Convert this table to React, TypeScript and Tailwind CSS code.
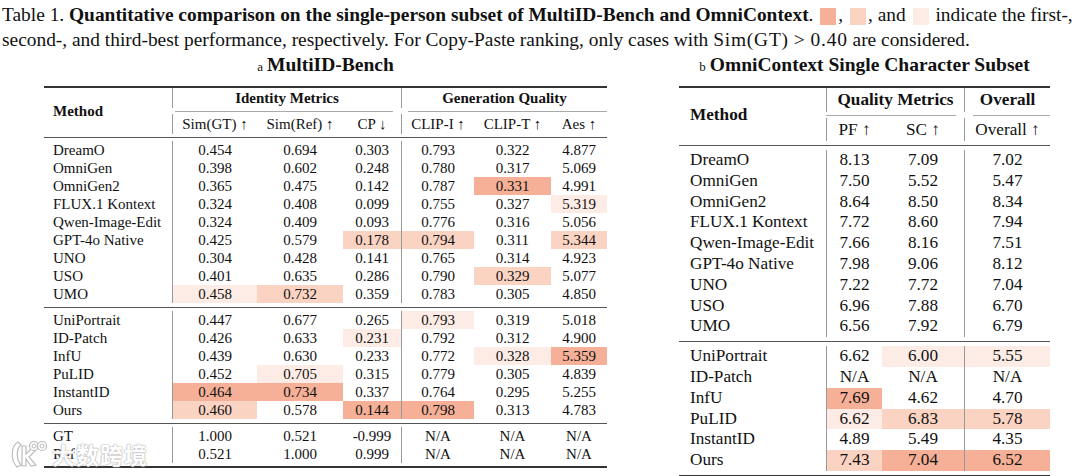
type Row = [string, string[], number[]?];

const hl = ["", "bg-[#f5b097]", "bg-[#fbd3c3]", "bg-[#fdece5]"];

const leftCols = ["w-[85px]", "w-[86px]", "w-[58px]", "w-[73px]", "w-[77px]", "w-[56px]"];
const rightCols = ["w-[56px]", "w-[82px]", "w-[86px]"];

const leftA: Row[] = [
  ["DreamO", ["0.454", "0.694", "0.303", "0.793", "0.322", "4.877"]],
  ["OmniGen", ["0.398", "0.602", "0.248", "0.780", "0.317", "5.069"]],
  ["OmniGen2", ["0.365", "0.475", "0.142", "0.787", "0.331", "4.991"], [0, 0, 0, 0, 1, 0]],
  ["FLUX.1 Kontext", ["0.324", "0.408", "0.099", "0.755", "0.327", "5.319"], [0, 0, 0, 0, 0, 3]],
  ["Qwen-Image-Edit", ["0.324", "0.409", "0.093", "0.776", "0.316", "5.056"]],
  ["GPT-4o Native", ["0.425", "0.579", "0.178", "0.794", "0.311", "5.344"], [0, 0, 2, 2, 0, 2]],
  ["UNO", ["0.304", "0.428", "0.141", "0.765", "0.314", "4.923"]],
  ["USO", ["0.401", "0.635", "0.286", "0.790", "0.329", "5.077"], [0, 0, 0, 0, 2, 0]],
  ["UMO", ["0.458", "0.732", "0.359", "0.783", "0.305", "4.850"], [3, 2, 0, 0, 0, 0]],
];

const leftB: Row[] = [
  ["UniPortrait", ["0.447", "0.677", "0.265", "0.793", "0.319", "5.018"], [0, 0, 0, 3, 0, 0]],
  ["ID-Patch", ["0.426", "0.633", "0.231", "0.792", "0.312", "4.900"], [0, 0, 3, 0, 0, 0]],
  ["InfU", ["0.439", "0.630", "0.233", "0.772", "0.328", "5.359"], [0, 0, 0, 0, 3, 1]],
  ["PuLID", ["0.452", "0.705", "0.315", "0.779", "0.305", "4.839"], [0, 3, 0, 0, 0, 0]],
  ["InstantID", ["0.464", "0.734", "0.337", "0.764", "0.295", "5.255"], [1, 1, 0, 0, 0, 0]],
  ["Ours", ["0.460", "0.578", "0.144", "0.798", "0.313", "4.783"], [2, 0, 1, 1, 0, 0]],
];

const leftC: Row[] = [
  ["GT", ["1.000", "0.521", "-0.999", "N/A", "N/A", "N/A"]],
  ["Ref", ["0.521", "1.000", "0.999", "N/A", "N/A", "N/A"]],
];

const rightA: Row[] = [
  ["DreamO", ["8.13", "7.09", "7.02"]],
  ["OmniGen", ["7.50", "5.52", "5.47"]],
  ["OmniGen2", ["8.64", "8.50", "8.34"]],
  ["FLUX.1 Kontext", ["7.72", "8.60", "7.94"]],
  ["Qwen-Image-Edit", ["7.66", "8.16", "7.51"]],
  ["GPT-4o Native", ["7.98", "9.06", "8.12"]],
  ["UNO", ["7.22", "7.72", "7.04"]],
  ["USO", ["6.96", "7.88", "6.70"]],
  ["UMO", ["6.56", "7.92", "6.79"]],
];

const rightB: Row[] = [
  ["UniPortrait", ["6.62", "6.00", "5.55"], [0, 3, 3]],
  ["ID-Patch", ["N/A", "N/A", "N/A"]],
  ["InfU", ["7.69", "4.62", "4.70"], [1, 0, 0]],
  ["PuLID", ["6.62", "6.83", "5.78"], [3, 2, 2]],
  ["InstantID", ["4.89", "5.49", "4.35"]],
  ["Ours", ["7.43", "7.04", "6.52"], [2, 1, 1]],
];

const Swatch = ({ c }: { c: string }) => (
  <span className={`inline-block w-[16px] h-[17px] align-[-4px] mx-[2px] ${c}`} />
);

const LeftRows = ({ rows }: { rows: Row[] }) => (
  <div className="flex flex-col">
    {rows.map(([name, vals, marks]) => (
      <div key={name} className="flex h-[18px] items-stretch">
        <div className="w-[128px] pl-[9px] leading-[18px]">{name}</div>
        {vals.map((v, i) => (
          <div
            key={i}
            className={`${leftCols[i]} text-center leading-[18px] ${i === 0 || i === 3 ? "border-l border-[#999]" : ""} ${hl[marks?.[i] ?? 0]}`}
          >
            {v}
          </div>
        ))}
      </div>
    ))}
  </div>
);

const RightRows = ({ rows }: { rows: Row[] }) => (
  <div className="flex flex-col">
    {rows.map(([name, vals, marks]) => (
      <div key={name} className="flex h-[20.8px] items-stretch">
        <div className="w-[147px] pl-[11px] leading-[20.8px]">{name}</div>
        {vals.map((v, i) => (
          <div
            key={i}
            className={`${rightCols[i]} text-center leading-[20.8px] ${i === 0 || i === 2 ? "border-l border-[#999]" : ""} ${hl[marks?.[i] ?? 0]}`}
          >
            {v}
          </div>
        ))}
      </div>
    ))}
  </div>
);

// faint site watermark in the bottom-left corner
const Watermark = () => (
  <div className="absolute left-[8px] top-[438px] flex items-center gap-[4px] opacity-90">
    <svg width="40" height="32" viewBox="0 0 40 32">
      <g fill="#fff" stroke="#b5b5b5" strokeWidth="1.2">
        <path d="M10 4 C3 8 2 22 9 29 L13 27 C8 21 8 11 13 7 Z" />
        <path d="M14 8 L18 8 L18 16 L24 10 L28 12 L21 19 L28 27 L23 28 L18 21 L18 28 L14 28 Z" />
        <circle cx="26" cy="8" r="4.5" />
        <circle cx="34" cy="8" r="4.5" />
      </g>
      <circle cx="26" cy="8" r="2" fill="#fff" stroke="#b5b5b5" strokeWidth="1" />
      <circle cx="34" cy="8" r="2" fill="#fff" stroke="#b5b5b5" strokeWidth="1" />
    </svg>
    <span className="text-[23px] leading-none font-bold text-white tracking-[1px] [font-family:'Noto_Sans_CJK_SC',sans-serif] [text-shadow:0_0_1px_#aaa,0_0_1px_#aaa,0_0_2px_#bbb]">
      大数跨境
    </span>
  </div>
);

export default function App() {
  return (
    <div className="relative w-[1080px] h-[476px] overflow-hidden bg-white text-[#111] [font-family:'Liberation_Serif','Times_New_Roman',serif]">
      {/* caption */}
      <div className="pt-[2px] pl-[2px] text-[19.4px] leading-[25px] whitespace-nowrap">
        <p>
          Table 1. <b>Quantitative comparison on the single-person subset of MultiID-Bench and OmniContext</b>.{" "}
          <Swatch c={hl[1]} />, <Swatch c={hl[2]} />, and <Swatch c={hl[3]} /> indicate the first-,
        </p>
        <p>
          second-, and third-best performance, respectively. For Copy-Paste ranking, only cases with{" "}
          <span className="tracking-[0.8px]">
            Sim(GT)<span className="mx-[5px]">&gt;</span>0.40
          </span>{" "}
          are considered.
        </p>
      </div>

      <div className="flex pl-[44px] gap-[72px]">
        {/* left table */}
        <div className="w-[563px] flex flex-col">
          <div className="h-[26px] leading-[26px] text-center">
            <span className="text-[13px]">a</span> <b className="text-[19.5px]">MultiID-Bench</b>
          </div>
          <div className="mt-[8px] h-[2px] bg-[#333]" />
          <div className="text-[15px]">
            <div className="grid grid-cols-[128px_85px_86px_58px_73px_77px_56px] grid-rows-[20px_6px_20px]">
              <div className="row-span-3 flex items-center pl-[9px] font-bold">Method</div>
              <div className="col-span-3 border-l border-[#999] text-center font-bold leading-[20px]">Identity Metrics</div>
              <div className="col-span-3 border-l border-[#999] text-center font-bold leading-[20px]">Generation Quality</div>
              <div className="col-span-3 pt-[3px] pl-[3px] pr-[8px]">
                <div className="border-t border-[#aaa]" />
              </div>
              <div className="col-span-3 pt-[3px] pl-[7px]">
                <div className="border-t border-[#aaa]" />
              </div>
              <div className="border-l border-[#999] text-center leading-[20px]">Sim(GT) ↑</div>
              <div className="text-center leading-[20px]">Sim(Ref) ↑</div>
              <div className="text-center leading-[20px]">CP ↓</div>
              <div className="border-l border-[#999] text-center leading-[20px]">CLIP-I ↑</div>
              <div className="text-center leading-[20px]">CLIP-T ↑</div>
              <div className="text-center leading-[20px]">Aes ↑</div>
            </div>
            <div className="mt-[3px] h-px bg-[#555]" />
            <div className="pt-[3px] pb-[4px]">
              <LeftRows rows={leftA} />
            </div>
            <div className="h-px bg-[#555]" />
            <div className="pt-[3px] pb-[4px]">
              <LeftRows rows={leftB} />
            </div>
            <div className="h-px bg-[#555]" />
            <div className="pt-[3px] pb-[3px]">
              <LeftRows rows={leftC} />
            </div>
            <div className="h-[2px] bg-[#333]" />
          </div>
        </div>

        {/* right table */}
        <div className="w-[371px] flex flex-col">
          <div className="h-[26px] leading-[26px] text-center">
            <span className="text-[13px]">b</span> <b className="text-[19.5px]">OmniContext Single Character Subset</b>
          </div>
          <div className="mt-[8px] h-[2px] bg-[#333]" />
          <div className="text-[17.2px]">
            <div className="grid grid-cols-[147px_56px_82px_86px] grid-rows-[24px_6px_23px]">
              <div className="row-span-3 flex items-center pl-[11px] font-bold">Method</div>
              <div className="col-span-2 border-l border-[#999] text-center font-bold leading-[24px]">Quality Metrics</div>
              <div className="border-l border-[#999] text-center font-bold leading-[24px]">Overall</div>
              <div className="col-span-2 pt-[3px] pr-[8px]">
                <div className="border-t border-[#aaa]" />
              </div>
              <div className="pt-[3px] pl-[9px]">
                <div className="border-t border-[#aaa]" />
              </div>
              <div className="border-l border-[#999] text-center leading-[23px]">PF ↑</div>
              <div className="text-center leading-[23px]">SC ↑</div>
              <div className="border-l border-[#999] text-center leading-[23px]">Overall ↑</div>
            </div>
            <div className="mt-[4px] h-px bg-[#555]" />
            <div className="pt-[4px] pb-[4px]">
              <RightRows rows={rightA} />
            </div>
            <div className="h-px bg-[#555]" />
            <div className="pt-[4px] pb-[4px]">
              <RightRows rows={rightB} />
            </div>
            <div className="h-[2px] bg-[#333]" />
          </div>
        </div>
      </div>

      <Watermark />
    </div>
  );
}
